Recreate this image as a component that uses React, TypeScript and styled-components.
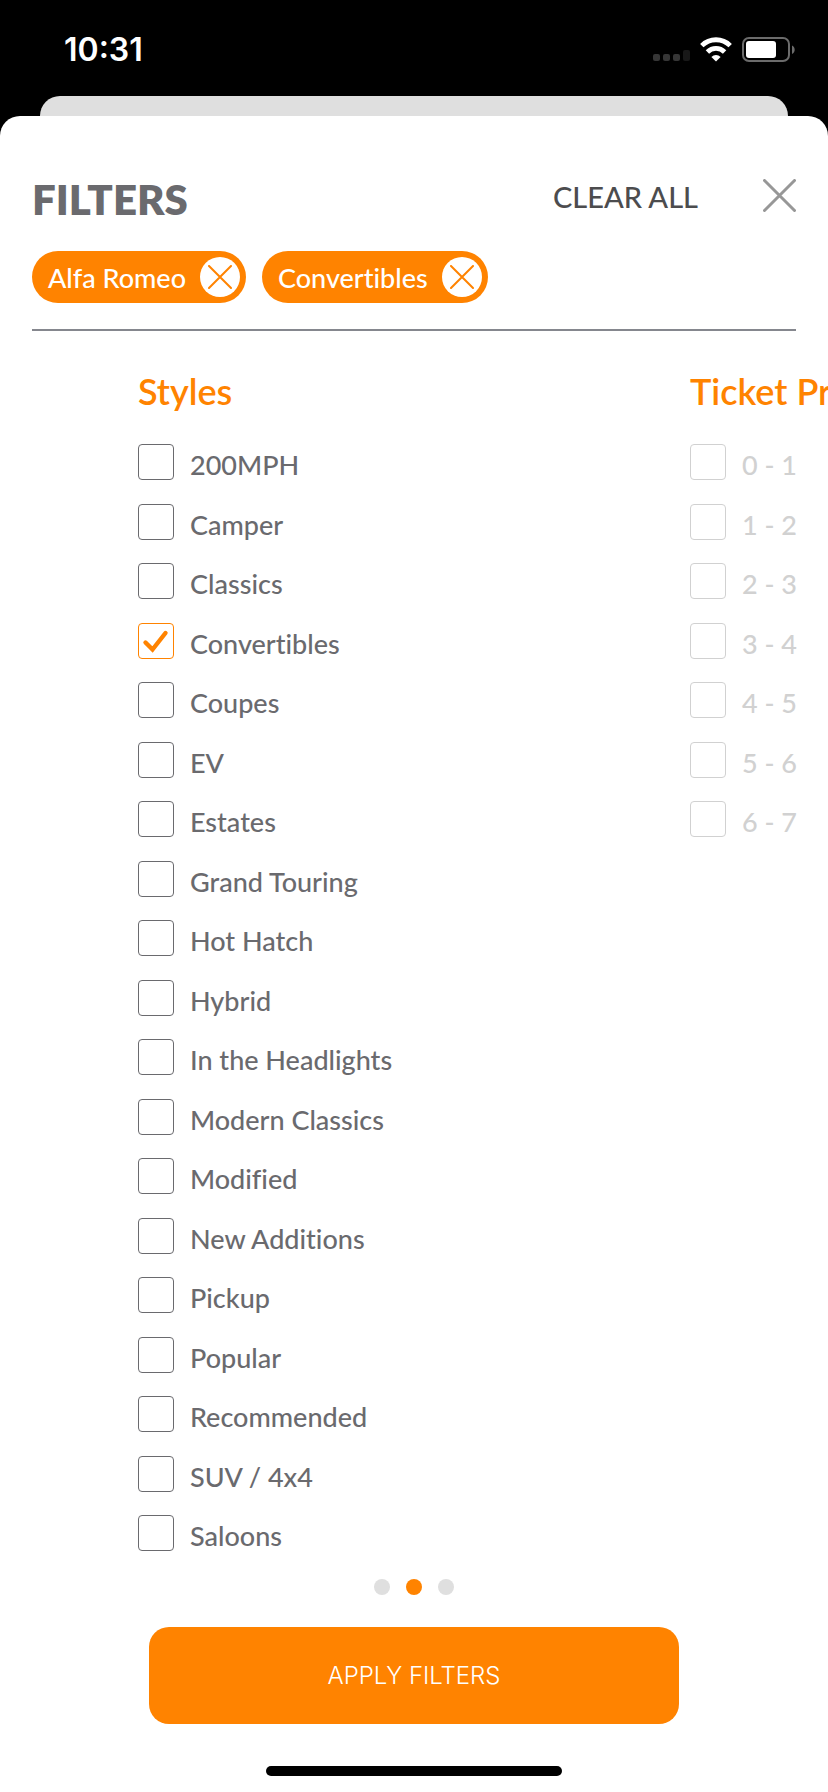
import { useState } from "react";
import styled, { createGlobalStyle } from "styled-components";

const ORANGE = "#ff8300";
const GREY = "#6a6a6e";

const GlobalStyle = createGlobalStyle`
  *, *::before, *::after { box-sizing: border-box; }
  body {
    margin: 0;
    background: #000;
    font-family: Lato, sans-serif;
    font-variant-ligatures: none;
  }
  button { font: inherit; border: 0; padding: 0; background: none; cursor: pointer; }
  h1, h2, ul { margin: 0; padding: 0; }
`;

const Screen = styled.div`
  display: flex;
  flex-direction: column;
  min-height: 100vh;
  overflow: hidden;
`;

const StatusBar = styled.div`
  display: flex;
  align-items: center;
  justify-content: space-between;
  height: 96px;
  padding: 4px 33px 0 64px;
  color: #fff;
`;

const Clock = styled.time`
  font: 600 32px/40px Inter, sans-serif;
`;

const StatusIcons = styled.div`
  display: flex;
  align-items: center;
  gap: 10px;
`;

const PreviousCard = styled.div`
  height: 20px;
  margin: 0 40px;
  border-radius: 20px 20px 0 0;
  background: #dfdfdf;
`;

const Sheet = styled.main`
  display: flex;
  flex: 1;
  flex-direction: column;
  border-radius: 20px 20px 0 0;
  background: #fff;
`;

const Header = styled.header`
  display: flex;
  align-items: center;
  margin: 0 32px;
  padding-top: 44px;
`;

const Title = styled.h1`
  flex: 1;
  padding-top: 8px;
  color: ${GREY};
  font-size: 42px;
  font-weight: 800;
  line-height: 62px;
`;

const ClearButton = styled.button`
  margin-right: 65px;
  padding-top: 4px;
  color: #4c4c4e;
  font-size: 29px;
  font-weight: 500;
  line-height: 40px;
`;

const CloseButton = styled.button`
  display: flex;
  color: #979797;
`;

const Chips = styled.div`
  display: flex;
  gap: 16px;
  margin: 21px 32px 0;
`;

const Chip = styled.span`
  display: flex;
  align-items: center;
  gap: 14px;
  height: 52px;
  padding: 0 6px 0 16px;
  border-radius: 26px;
  background: ${ORANGE};
  color: #fff;
  font-size: 27px;
  font-weight: 500;
`;

const ChipRemove = styled.button`
  display: grid;
  place-items: center;
  width: 40px;
  height: 40px;
  border-radius: 50%;
  background: #fff;
  color: ${ORANGE};
`;

const Divider = styled.hr`
  align-self: stretch;
  height: 2px;
  margin: 26px 32px 0;
  border: 0;
  background: #85878e;
`;

const Carousel = styled.div`
  display: flex;
  overflow: hidden;
  padding: 36px 0 0 calc(100% / 6);
`;

const Panel = styled.section`
  flex: 0 0 80%;
`;

const PanelTitle = styled.h2`
  margin-bottom: 29px;
  color: ${ORANGE};
  font-size: 36px;
  font-weight: 600;
  line-height: 48px;
  white-space: nowrap;
`;

const Options = styled.ul`
  list-style: none;
`;

const Option = styled.li`
  height: 60px;

  &:nth-child(even) {
    height: 59px;
  }
`;

const OptionLabel = styled.label<{ $muted: boolean }>`
  display: inline-flex;
  align-items: flex-start;
  gap: 16px;
  color: ${(p) => (p.$muted ? "#d1d1d1" : GREY)};
  font-size: 27px;
  font-weight: 500;
  line-height: 42px;
`;

const CheckFrame = styled.span`
  display: grid;
  width: 36px;
  height: 36px;

  & > * {
    grid-area: 1 / 1;
  }
`;

const CheckInput = styled.input<{ $muted: boolean }>`
  appearance: none;
  width: 36px;
  height: 36px;
  margin: 0;
  border: 1px solid ${(p) => (p.$muted ? "#d1d1d1" : GREY)};
  border-radius: 4px;
  background: #fff;

  &:checked {
    border-color: ${ORANGE};
  }
`;

const Dots = styled.div`
  display: flex;
  justify-content: center;
  gap: 16px;
  margin-top: 4px;
`;

const Dot = styled.button<{ $active: boolean }>`
  width: 16px;
  height: 16px;
  border-radius: 50%;
  background: ${(p) => (p.$active ? ORANGE : "#dfdfdf")};
`;

const ApplyButton = styled.button`
  align-self: center;
  width: 64%;
  height: 97px;
  margin-top: 32px;
  border-radius: 20px;
  background: ${ORANGE};
  color: #fff;
  font: 300 24px/32px Inter, sans-serif;
`;

const HomeIndicator = styled.div`
  align-self: center;
  width: 296px;
  height: 10px;
  margin: auto 0 16px;
  border-radius: 5px;
  background: #000;
`;

const Cross = ({ size, stroke }: { size: number; stroke: number }) => (
  <svg width={size} height={size} viewBox={`0 0 ${size} ${size}`} fill="none" stroke="currentColor" strokeWidth={stroke} strokeLinecap="round" aria-hidden="true">
    <path d={`M${stroke / 2} ${stroke / 2}L${size - stroke / 2} ${size - stroke / 2}M${size - stroke / 2} ${stroke / 2}L${stroke / 2} ${size - stroke / 2}`} />
  </svg>
);

const Tick = () => (
  <svg width="36" height="36" viewBox="0 0 36 36" fill="none" stroke={ORANGE} strokeWidth="4.4" strokeLinecap="round" pointerEvents="none" aria-hidden="true">
    <path d="M7.5 19.5L14.5 26.5L27.5 10" />
  </svg>
);

const SignalIcon = () => (
  <svg width="37" height="26" viewBox="0 0 37 26" aria-hidden="true">
    <g fill="#363636">
      <rect x="0" y="17" width="7" height="7" rx="2" />
      <rect x="10" y="17" width="7" height="7" rx="2" />
      <rect x="20" y="17" width="7" height="7" rx="2" />
    </g>
    <rect x="30" y="13" width="7" height="11" rx="2" fill="#181818" />
  </svg>
);

const WifiIcon = () => (
  <svg width="32" height="26" viewBox="0 0 32 26" aria-hidden="true">
    <g fill="none" stroke="#fff" strokeWidth="4.8">
      <path d="M1.8 8.6A20.2 20.2 0 0 1 30.2 8.6" />
      <path d="M7.4 15A12.2 12.2 0 0 1 24.6 15" />
    </g>
    <path d="M16 24.4L11.4 19.9A6.6 6.6 0 0 1 20.6 19.9Z" fill="#fff" />
  </svg>
);

const BatteryIcon = () => (
  <svg width="53" height="26" viewBox="0 0 53 26" aria-hidden="true">
    <rect x="1" y="1" width="46" height="23" rx="6" fill="none" stroke="#6b6b6b" strokeWidth="2" />
    <rect x="4" y="4" width="30" height="17" rx="3" fill="#fff" />
    <path d="M50 8.5C53.6 10 53.6 15.5 50 17Z" fill="#6b6b6b" />
  </svg>
);

const STYLES = [
  "200MPH", "Camper", "Classics", "Convertibles", "Coupes", "EV", "Estates",
  "Grand Touring", "Hot Hatch", "Hybrid", "In the Headlights", "Modern Classics",
  "Modified", "New Additions", "Pickup", "Popular", "Recommended", "SUV / 4x4", "Saloons",
];
const PRICES = ["0 - 1", "1 - 2", "2 - 3", "3 - 4", "4 - 5", "5 - 6", "6 - 7"];

type FilterPanelProps = {
  title: string;
  options: string[];
  selected: string[];
  muted?: boolean;
  onToggle: (name: string) => void;
};

const FilterPanel = ({ title, options, selected, muted = false, onToggle }: FilterPanelProps) => (
  <Panel>
    <PanelTitle>{title}</PanelTitle>
    <Options>
      {options.map((name) => (
        <Option key={name}>
          <OptionLabel $muted={muted}>
            <CheckFrame>
              <CheckInput
                type="checkbox"
                $muted={muted}
                disabled={muted}
                checked={selected.includes(name)}
                onChange={() => onToggle(name)}
              />
              {selected.includes(name) && <Tick />}
            </CheckFrame>
            {name}
          </OptionLabel>
        </Option>
      ))}
    </Options>
  </Panel>
);

export default function App() {
  const [selected, setSelected] = useState(["Alfa Romeo", "Convertibles"]);
  const toggle = (name: string) =>
    setSelected((list) => (list.includes(name) ? list.filter((n) => n !== name) : [...list, name]));

  return (
    <Screen>
      <GlobalStyle />
      <StatusBar>
        <Clock>10:31</Clock>
        <StatusIcons>
          <SignalIcon />
          <WifiIcon />
          <BatteryIcon />
        </StatusIcons>
      </StatusBar>
      <PreviousCard />
      <Sheet>
        <Header>
          <Title>FILTERS</Title>
          <ClearButton type="button" onClick={() => setSelected([])}>CLEAR ALL</ClearButton>
          <CloseButton type="button" aria-label="Close">
            <Cross size={33} stroke={3} />
          </CloseButton>
        </Header>
        <Chips>
          {selected.map((name) => (
            <Chip key={name}>
              {name}
              <ChipRemove type="button" aria-label={`Remove ${name}`} onClick={() => toggle(name)}>
                <Cross size={24} stroke={2} />
              </ChipRemove>
            </Chip>
          ))}
        </Chips>
        <Divider />
        <Carousel>
          <FilterPanel title="Styles" options={STYLES} selected={selected} onToggle={toggle} />
          <FilterPanel title="Ticket Price" options={PRICES} selected={selected} muted onToggle={toggle} />
        </Carousel>
        <Dots>
          {["Makes", "Styles", "Ticket Price"].map((name) => (
            <Dot key={name} type="button" aria-label={name} $active={name === "Styles"} />
          ))}
        </Dots>
        <ApplyButton type="button">APPLY FILTERS</ApplyButton>
        <HomeIndicator />
      </Sheet>
    </Screen>
  );
}
